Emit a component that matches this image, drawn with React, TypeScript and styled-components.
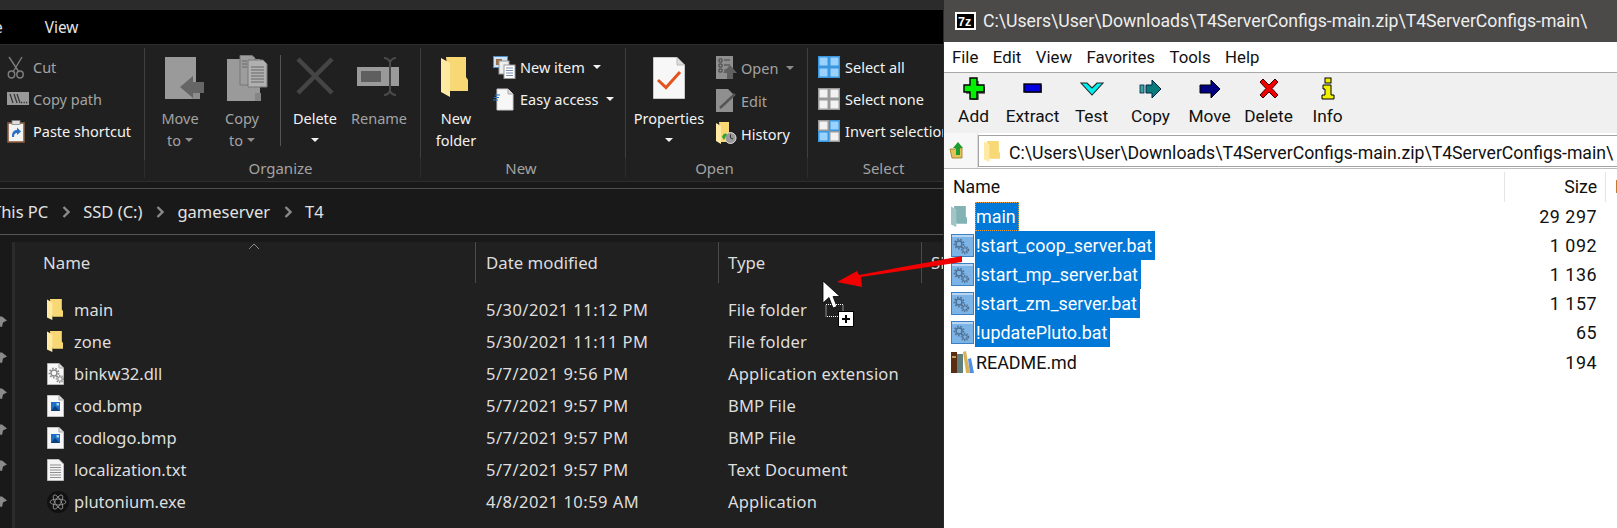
import React from 'react';
import styled, { createGlobalStyle } from 'styled-components';

const Global = createGlobalStyle`
  html, body { margin: 0; padding: 0; background: #191919; }
  * { box-sizing: border-box; }
`;

const Root = styled.div`
  position: relative; width: 1617px; height: 528px; display: flex; overflow: hidden;
  font-family: "Noto Sans", "Open Sans", sans-serif;
`;
const Explorer = styled.div`
  width: 944px; height: 528px; flex: none; display: flex; flex-direction: column; overflow: hidden;
  background: #191919; border-right: 1px solid #2a2a2a;
`;
const TopStrip = styled.div` height: 10px; background: #2b2b2b; flex: none; `;
const Tabs = styled.div`
  height: 34px; background: #000; flex: none; display: flex; align-items: center; color: #e6e6e6; font-size: 15.4px; padding-top: 1px;
`;
const Tab = styled.span<{ $clip?: boolean }>`
  margin-left: ${p => (p.$clip ? '-6px' : '0')};
  padding-right: ${p => (p.$clip ? '42px' : '0')};
`;
const Ribbon = styled.div`
  height: 138px; flex: none; display: flex; background: #202020; border-top: 1px solid #2d2d2d; border-bottom: 1px solid #2e2e2e;
`;
const Group = styled.div<{ $w: number }>`
  width: ${p => p.$w}px; flex: none; display: flex; flex-direction: column;
`;
const GroupBody = styled.div<{ $pad?: number }>`
  height: 112px; display: flex; padding-left: ${p => p.$pad ?? 0}px; border-right: 1px solid #3f3f3f; margin-top: 3px;
`;
const GroupLabel = styled.div`
  flex: 1; margin-bottom: 3px; display: flex; align-items: center; justify-content: center; color: #a3a3a3; font-size: 15px;
  border-right: 1px solid #2d2d2d; padding-right: 4px;
`;
const LargeButton = styled.div<{ $w: number; $off?: boolean }>`
  width: ${p => p.$w}px; flex: none; display: flex; flex-direction: column; align-items: center;
  color: ${p => (p.$off ? '#a3a3a3' : '#f2f2f2')}; font-size: 14.5px;
`;
const LargeIcon = styled.div<{ $dx?: number; $top?: number }>`
  height: 59px; width: 100%; display: flex; justify-content: center; align-items: flex-start;
  padding-top: ${p => p.$top ?? 9}px;
  padding-left: ${p => Math.max(0, (p.$dx ?? 0) * 2)}px;
  padding-right: ${p => Math.max(0, -(p.$dx ?? 0) * 2)}px;
`;
const LabelLine = styled.div`
  height: 22px; line-height: 22px; display: flex; align-items: center; gap: 4px; white-space: nowrap;
`;
const Caret = styled.span<{ $off?: boolean }>`
  display: inline-block; width: 0; height: 0; border-left: 4px solid transparent; border-right: 4px solid transparent;
  border-top: 4px solid ${p => (p.$off ? '#8c8c8c' : '#f2f2f2')};
`;
const VSep = styled.div`
  width: 1px; height: 91px; background: #555; margin: 7px 0 0 7px; flex: none;
`;
const SmallCol = styled.div<{ $pad: number; $top?: number }>`
  display: flex; flex-direction: column; padding-left: ${p => p.$pad}px; padding-top: ${p => p.$top ?? 3}px;
`;
const SmallRow = styled.div<{ $slot: number; $h?: number; $off?: boolean }>`
  display: grid; grid-template-columns: ${p => p.$slot}px auto auto; column-gap: 0; align-items: center;
  justify-content: start; height: ${p => p.$h ?? 32}px; white-space: nowrap; font-size: 14.5px;
  color: ${p => (p.$off ? '#a3a3a3' : '#f2f2f2')};
`;
const RowCaret = styled.span` margin-left: 8px; display: flex; align-items: center; `;
const BarGap = styled.div` height: 6px; flex: none; `;
const PathBar = styled.div`
  height: 47px; flex: none; display: flex; align-items: center; border-top: 1px solid #4d4d4d; border-bottom: 1px solid #565656;
  color: #e2e2e2; font-size: 16.5px;
`;
const Crumb = styled.span<{ $clip?: boolean }>` margin-left: ${p => (p.$clip ? '-8px' : '0')}; white-space: nowrap; `;
const Chevron = styled.span`
  width: 35px; flex: none; display: flex; justify-content: center;
`;
const Content = styled.div` flex: 1; display: flex; margin-top: 7px; min-height: 0; `;
const NavPane = styled.div`
  width: 15px; flex: none; display: flex; flex-direction: column; padding-top: 70px; border-right: 3px solid #2b2b2b; overflow: hidden;
`;
const Pin = styled.div` height: 36px; flex: none; `;
const List = styled.div` flex: 1; background: #202020; min-width: 0; `;
const Header = styled.div`
  position: relative; height: 41px; display: grid; grid-template-columns: 461px 243px 203px 1fr; color: #dcdcdc; font-size: 16.8px; margin-bottom: 11px;
`;
const HeadCell = styled.div<{ $pad: number; $end?: boolean }>`
  padding-left: ${p => p.$pad}px; display: flex; align-items: center; overflow: hidden; white-space: nowrap;
  border-right: ${p => (p.$end ? 'none' : '1px solid #4a4a4a')};
`;
const SortMark = styled.svg` position: absolute; left: 233px; top: 1px; `;
const FileRow = styled.div`
  height: 31.95px; display: grid; grid-template-columns: 461px 243px 203px 1fr; align-items: center; color: #dedede; font-size: 16.5px; white-space: nowrap;
`;
const NameCell = styled.div` display: grid; grid-template-columns: 27px auto; justify-content: start; align-items: center; padding-left: 32px; `;
const DateCell = styled.div` padding-left: 10px; letter-spacing: 0.47px; `;
const TypeCell = styled.div` padding-left: 9px; letter-spacing: 0.2px; `;

const Zip = styled.div`
  flex: 1; min-width: 0; display: flex; flex-direction: column; background: #fff; overflow: hidden;
  font-family: Roboto, "Noto Sans", sans-serif;
`;
const ZipTitle = styled.div`
  height: 42px; flex: none; background: #4b4a49; display: flex; align-items: center; padding-left: 11px; gap: 7px; color: #eee; font-size: 17.66px; white-space: nowrap;
`;
const ZipMenu = styled.div`
  height: 31px; flex: none; background: #fff; border-bottom: 1px solid #a8a8a8; display: flex; align-items: center; padding-left: 8px; gap: 14.5px; color: #111; font-size: 16.8px;
`;
const ZipToolbar = styled.div`
  height: 60px; flex: none; background: #f0f0f0; display: grid; grid-template-columns: repeat(7, 59px); align-content: start;
`;
const ToolButton = styled.div`
  display: flex; flex-direction: column; align-items: center; color: #111; font-size: 17.3px;
`;
const ToolIcon = styled.div` height: 33px; padding-top: 4px; display: flex; justify-content: center; `;
const ZipAddress = styled.div` height: 36px; flex: none; display: flex; background: #fff; border-bottom: 1px solid #bdbdbd; `;
const UpButton = styled.div`
  width: 34px; flex: none; background: #f7f7f7; border-right: 1px solid #ddd; display: flex; align-items: center; padding-left: 5px;
`;
const AddressBox = styled.div`
  flex: 1; min-width: 0; margin: 2px 0 1px 0; border: 1px solid #a3a3a3; border-right: none; display: flex; align-items: center; padding-left: 5px; gap: 9px; color: #111; font-size: 17.66px; white-space: nowrap; overflow: hidden;
`;
const AddressText = styled.span` padding-top: 3px; `;
const ZipHeader = styled.div`
  height: 33px; flex: none; display: grid; grid-template-columns: 561px 101px 1fr; color: #111; font-size: 17.66px; padding-top: 3px;
`;
const ZipHead = styled.div<{ $right?: boolean; $line?: boolean }>`
  display: flex; align-items: center; white-space: nowrap; overflow: hidden;
  justify-content: ${p => (p.$right ? 'flex-end' : 'flex-start')};
  padding: ${p => (p.$right ? '0 8px 0 0' : '0 0 0 9px')};
  border-right: ${p => (p.$line ? '1px solid #e5e5e5' : 'none')};
`;
const ZipRow = styled.div`
  height: 29.1px; display: grid; grid-template-columns: 561px 101px; align-items: center; color: #111; font-size: 17.9px;
`;
const ZipName = styled.div` display: flex; align-items: stretch; height: 100%; padding-left: 7px; `;
const ZipIcon = styled.div` width: 24px; flex: none; display: flex; align-items: center; `;
const ZipLabel = styled.span<{ $sel?: boolean; $focus?: boolean }>`
  display: flex; align-items: center; padding: 0 3px 0 1px; white-space: nowrap;
  background: ${p => (p.$sel ? '#0078d7' : 'transparent')};
  color: ${p => (p.$sel ? '#fff' : '#111')};
  outline: ${p => (p.$focus ? '1px dotted #f0a040' : 'none')};
  outline-offset: -1px;
`;
const ZipSize = styled.div` text-align: right; padding-right: 9px; letter-spacing: 0.5px; `;
const Overlay = styled.svg` position: absolute; left: 0; top: 0; pointer-events: none; `;

const Folder = ({ h = 40 }: { h?: number }) => (
  <svg width={h * 0.675} height={h} viewBox="0 0 27 40">
    <path d="M5 0H25V20L27 23V34H9Z" fill="#f8d775" />
    <path d="M0 1L9 6V40L0 35Z" fill="#ffe9a3" />
  </svg>
);
const SmallFolder = ({ tint }: { tint?: boolean }) => (
  <svg width="16" height="21" viewBox="0 0 27 40" preserveAspectRatio="none">
    <path d="M5 0H25V20L27 23V34H9Z" fill={tint ? '#83b2b4' : '#f8d775'} />
    <path d="M0 1L9 6V40L0 35Z" fill={tint ? '#9fc5c7' : '#ffe9a3'} />
  </svg>
);
const MoveTo = () => (
  <svg width="40" height="42" viewBox="0 0 40 42">
    <rect x="0" y="0" width="31" height="42" fill="#9a9a9a" />
    <rect x="27" y="36" width="8" height="6" fill="#8d8d8d" />
    <path d="M15 30L28 19V25H39V36H28V41Z" fill="#666" />
  </svg>
);
const CopyTo = () => (
  <svg width="41" height="46" viewBox="0 0 41 46">
    <rect x="0" y="4" width="33" height="42" fill="#9a9a9a" />
    <rect x="28" y="38" width="6" height="8" fill="#858585" />
    <path d="M13 0.5H25L28 3V30H13Z" fill="#9d9d9d" stroke="#777" />
    <path d="M21 5H36L40 9V32H21Z" fill="#b0b0b0" stroke="#777" />
    <path d="M24 12H37M24 15H37M24 18H37M24 21H37M24 24H37M24 27H37M15 6H20M15 9H20M15 12H20" stroke="#666" strokeWidth="1" />
  </svg>
);
const DeleteX = () => (
  <svg width="38" height="38" viewBox="0 0 38 38">
    <path d="M2 2L36 36M36 2L2 36" stroke="#454545" strokeWidth="4.5" />
  </svg>
);
const RenameIcon = () => (
  <svg width="44" height="40" viewBox="0 0 44 40">
    <rect x="0" y="10" width="42" height="19" fill="#9a9a9a" />
    <rect x="4" y="14" width="20" height="11" fill="#5f5f5f" />
    <path d="M27 1C31 1 32 3 33 5C34 3 35 1 39 1M33 5V34M27 38C31 38 32 36 33 34C34 36 35 38 39 38" fill="none" stroke="#4a4a4a" strokeWidth="2" />
  </svg>
);
const Scissors = () => (
  <svg width="18" height="23" viewBox="0 0 18 23">
    <path d="M2 1L12 16M15 1L6 16" stroke="#7d7d7d" strokeWidth="1.4" fill="none" />
    <ellipse cx="4.5" cy="18.5" rx="3.2" ry="3.4" fill="none" stroke="#7d7d7d" strokeWidth="1.5" />
    <ellipse cx="13" cy="18.5" rx="3.2" ry="3.4" fill="none" stroke="#7d7d7d" strokeWidth="1.5" />
  </svg>
);
const CopyPath = () => (
  <svg width="22" height="14" viewBox="0 0 22 14">
    <rect width="22" height="13" fill="#999" />
    <path d="M3 2L6 11M7 2L10 11M10 2L13 11" stroke="#333" strokeWidth="1.2" />
    <path d="M14 10.5H15.2M16.6 10.5H17.8M19 10.5H20.2" stroke="#333" strokeWidth="1.3" />
  </svg>
);
const PasteShortcut = () => (
  <svg width="18" height="23" viewBox="0 0 18 23">
    <rect x="1" y="3" width="16" height="19" fill="#f3f3f3" stroke="#8a5b3d" strokeWidth="1.6" />
    <rect x="5" y="0.5" width="8" height="4" fill="#ddd" stroke="#777" strokeWidth=".7" />
    <path d="M5 16C5 11 8 10 10 10V7.5L14 11.5L10 15V13C8 13 7 14 7 17H5Z" fill="#2d6fc4" />
  </svg>
);
const NewItem = () => (
  <svg width="23" height="23" viewBox="0 0 23 23">
    <rect x="0.5" y="0.5" width="14" height="11" fill="#cfe3f5" stroke="#4b8ec9" />
    <rect x="3" y="3" width="6" height="6" fill="#9a6e4d" />
    <rect x="6" y="5" width="10" height="13" fill="#eee" stroke="#999" />
    <rect x="11" y="9" width="11" height="13.5" fill="#fff" stroke="#999" />
    <path d="M13 12H20M13 14.5H20M13 17H20M13 19.5H20" stroke="#7b8fb0" />
  </svg>
);
const EasyAccess = () => (
  <svg width="21" height="23" viewBox="0 0 21 23">
    <path d="M4 1H15L20 6V22H4Z" fill="#f7f7f7" stroke="#ccc" />
    <path d="M15 1V6H20" fill="#ddd" stroke="#aaa" />
    <path d="M2 7H7M1 9.5H6M0 12H5" stroke="#1f77d0" strokeWidth="1.2" />
  </svg>
);
const Properties = () => (
  <svg width="32" height="42" viewBox="0 0 32 42">
    <path d="M0.5 0.5H24L31.5 8V41.5H0.5Z" fill="#f7f7f7" stroke="#c8c8c8" />
    <path d="M24 0.5V8H31.5" fill="#dcdcdc" stroke="#bbb" />
    <path d="M5 23L13 30.5L27 15" fill="none" stroke="#e2531d" strokeWidth="3" />
  </svg>
);
const OpenIcon = () => (
  <svg width="21" height="23" viewBox="0 0 21 23">
    <rect width="17" height="23" fill="#8f8f8f" />
    <path d="M3 3H6V6H3ZM3 8H6V11H3ZM3 13H6V16H3ZM8 4H14M8 9H14M8 14H10" stroke="#444" fill="none" />
    <path d="M7 17L14 9L21 17H17V23H11V17Z" fill="#606060" />
  </svg>
);
const EditIcon = () => (
  <svg width="21" height="23" viewBox="0 0 21 23">
    <path d="M0 0H12L17 5V23H0Z" fill="#8f8f8f" />
    <path d="M4 19L19 5" stroke="#555" strokeWidth="2.4" />
  </svg>
);
const HistoryIcon = () => (
  <svg width="21" height="23" viewBox="0 0 21 23">
    <path d="M3 0H13V20H5Z" fill="#f8d775" />
    <path d="M0 1L5 4V22L0 19Z" fill="#ffe9a3" />
    <circle cx="14.5" cy="16" r="5.5" fill="#999" stroke="#ddd" />
    <path d="M14.5 12.5V16L17 17" stroke="#333" fill="none" />
    <path d="M6 15C7 11 10 11 11 12L8 18Z" fill="#2ea32e" />
  </svg>
);
const SelectIcon = ({ v }: { v: 'all' | 'none' | 'inv' }) => {
  const blue = { fill: '#99d1ff', stroke: '#3a96dd' };
  const white = { fill: '#f2f2f2', stroke: '#9a9a9a' };
  const map = { all: [blue, blue, blue, blue], none: [white, white, white, white], inv: [white, blue, blue, white] }[v];
  return (
    <svg width="22" height="22" viewBox="0 0 22 22">
      {[[0, 0], [11, 0], [0, 11], [11, 11]].map(([x, y], i) => (
        <rect key={i} x={x + 0.75} y={y + 0.75} width="9.5" height="9.5" fill={map[i].fill} stroke={map[i].stroke} strokeWidth="1.5" />
      ))}
    </svg>
  );
};
const PinIcon = () => (
  <svg width="7" height="13" viewBox="0 0 7 13">
    <path d="M0 0.5L2 0.5L7 4.5L3 6.5L2 11L0 10.5Z" fill="#8a8a8a" />
  </svg>
);
const ChevronIcon = () => (
  <svg width="8" height="12" viewBox="0 0 8 12"><path d="M1.5 1L6.5 6L1.5 11" fill="none" stroke="#8a8a8a" strokeWidth="2.4" /></svg>
);
const Gears = ({ x = 0, y = 0, c = '#8a8a8a' }: { x?: number; y?: number; c?: string }) => (
  <g transform={`translate(${x},${y})`} fill="none" stroke={c}>
    <circle cx="5" cy="5" r="3" strokeWidth="1.4" />
    <circle cx="5" cy="5" r="4.6" strokeWidth="1.6" strokeDasharray="1.6 1.6" />
    <circle cx="11" cy="11" r="2.2" strokeWidth="1.1" />
    <circle cx="11" cy="11" r="3.6" strokeWidth="1.3" strokeDasharray="1.3 1.3" />
  </g>
);
const DllIcon = () => (
  <svg width="17" height="22" viewBox="0 0 17 22">
    <path d="M0.5 0.5H12L16.5 5V21.5H0.5Z" fill="#f7f7f7" stroke="#b5b5b5" />
    <path d="M12 0.5V5H16.5" fill="#ddd" stroke="#aaa" />
    <Gears x={2} y={5} />
  </svg>
);
const BmpIcon = () => (
  <svg width="17" height="22" viewBox="0 0 17 22">
    <path d="M0.5 0.5H12L16.5 5V21.5H0.5Z" fill="#f7f7f7" stroke="#c0c0c0" />
    <path d="M12 0.5V5H16.5" fill="#ddd" stroke="#aaa" />
    <rect x="4" y="7" width="9" height="9" fill="#1b6fc4" />
    <path d="M4 16L8 11L13 16Z" fill="#0d3d7a" />
    <rect x="9.5" y="8" width="2.5" height="2.5" fill="#9fd2f7" />
  </svg>
);
const TxtIcon = () => (
  <svg width="17" height="22" viewBox="0 0 17 22">
    <path d="M0.5 0.5H12L16.5 5V21.5H0.5Z" fill="#f4f4f4" stroke="#bbb" />
    <path d="M3 6H14M3 8.5H14M3 11H14M3 13.5H14M3 16H14M3 18.5H14" stroke="#8f8f8f" />
  </svg>
);
const PlutoIcon = () => (
  <svg width="22" height="22" viewBox="2 0 22 22">
    <circle cx="13" cy="11" r="11" fill="#111" />
    <g fill="none" stroke="#9a9a9a" strokeWidth=".8">
      <ellipse cx="13" cy="11" rx="8" ry="3" />
      <ellipse cx="13" cy="11" rx="8" ry="3" transform="rotate(60 13 11)" />
      <ellipse cx="13" cy="11" rx="8" ry="3" transform="rotate(120 13 11)" />
    </g>
  </svg>
);
const BatIcon = () => (
  <svg width="23" height="23" viewBox="0 0 23 23">
    <rect x="0.5" y="0.5" width="22" height="22" fill="#7db4e8" stroke="#3b7fc4" />
    <rect x="1" y="1" width="21" height="2" fill="#b9d6f2" />
    <Gears x={3} y={5} c="#4f6f8f" />
  </svg>
);
const BooksIcon = () => (
  <svg width="23" height="23" viewBox="0 0 23 23">
    <rect x="0" y="1" width="6" height="21" fill="#5a2d12" />
    <rect x="1" y="5" width="4" height="2" fill="#c39a5a" />
    <rect x="6" y="3" width="6" height="19" fill="#5f7f7f" />
    <path d="M12 1L15 0L19 22H15Z" fill="#d8b25a" />
    <path d="M17 8L20 7L23 22H19Z" fill="#4f8fe8" />
  </svg>
);
const SevenZ = () => (
  <svg width="21" height="18" viewBox="0 0 21 18">
    <rect x="0" y="0" width="21" height="18" fill="#fff" />
    <rect x="2" y="2" width="17" height="14" fill="#000" />
    <text x="3" y="14" fontSize="12.5" fontWeight="700" fontFamily="Liberation Sans" fill="#fff">7z</text>
  </svg>
);
const AddIcon = () => (
  <svg width="22" height="25" viewBox="0 0 22 25">
    <path d="M8 3H15V9H21V16H15V22H8V16H2V9H8Z" fill="#777" transform="translate(1,1)" />
    <path d="M7 1H14V8H21V15H14V22H7V15H1V8H7Z" fill="#00f000" stroke="#000" strokeWidth="1.4" />
  </svg>
);
const ExtractIcon = () => (
  <svg width="20" height="25" viewBox="0 0 20 25">
    <rect x="2" y="8" width="17" height="8" fill="#777" />
    <rect x="1" y="7" width="17" height="8" fill="#0000e0" stroke="#000" strokeWidth="1.4" />
  </svg>
);
const TestIcon = () => (
  <svg width="24" height="25" viewBox="0 0 24 25">
    <path d="M1 6H7L12 11L17 6H23L12 18Z" fill="#00f0f0" stroke="#222" strokeWidth="1.1" />
  </svg>
);
const CopyArrow = () => (
  <svg width="24" height="25" viewBox="0 0 24 25">
    <rect x="1" y="8" width="4" height="8" fill="#3aa3a3" stroke="#024" strokeWidth=".8" />
    <path d="M7 8H13V3L22 12L13 21V16H7Z" fill="#0a7a7a" stroke="#024" strokeWidth="1" />
  </svg>
);
const MoveArrow = () => (
  <svg width="24" height="25" viewBox="0 0 24 25">
    <path d="M2 8H13V3L22 12L13 21V16H2Z" fill="#000080" stroke="#000" strokeWidth="1" />
  </svg>
);
const RedX = () => (
  <svg width="20" height="25" viewBox="0 0 20 25">
    <path d="M4 2L10 8L16 2L19 5L13 11.5L19 18L16 21L10 15L4 21L1 18L7 11.5L1 5Z" fill="#f00000" stroke="#300" strokeWidth="1" />
  </svg>
);
const InfoIcon = () => (
  <svg width="14" height="25" viewBox="0 0 14 25">
    <rect x="4" y="1" width="6" height="5" fill="#f0f000" stroke="#000" />
    <path d="M2 8H10V18H13V22H1V18H4V12H2Z" fill="#f0f000" stroke="#000" />
  </svg>
);
const UpIcon = () => (
  <svg width="18" height="20" viewBox="0 0 18 20">
    <path d="M1 8H6L7 7H13V17H3Z" fill="#e4c25a" stroke="#9a7a20" strokeWidth=".8" />
    <path d="M9 1L14 7H11V14H7V7H4Z" fill="#1f9a2f" />
  </svg>
);

const files = [
  ['main', '5/30/2021 11:12 PM', 'File folder', 'f'],
  ['zone', '5/30/2021 11:11 PM', 'File folder', 'f'],
  ['binkw32.dll', '5/7/2021 9:56 PM', 'Application extension', 'd'],
  ['cod.bmp', '5/7/2021 9:57 PM', 'BMP File', 'b'],
  ['codlogo.bmp', '5/7/2021 9:57 PM', 'BMP File', 'b'],
  ['localization.txt', '5/7/2021 9:57 PM', 'Text Document', 't'],
  ['plutonium.exe', '4/8/2021 10:59 AM', 'Application', 'p'],
];
const fileIcon = (k: string) =>
  k === 'f' ? <SmallFolder /> : k === 'd' ? <DllIcon /> : k === 'b' ? <BmpIcon /> : k === 't' ? <TxtIcon /> : <PlutoIcon />;

const zipRows = [
  ['main', '29 297', 'f'],
  ['!start_coop_server.bat', '1 092', 'b'],
  ['!start_mp_server.bat', '1 136', 'b'],
  ['!start_zm_server.bat', '1 157', 'b'],
  ['!updatePluto.bat', '65', 'b'],
  ['README.md', '194', 'r'],
];
const tools: [string, React.ReactNode][] = [
  ['Add', <AddIcon />], ['Extract', <ExtractIcon />], ['Test', <TestIcon />], ['Copy', <CopyArrow />],
  ['Move', <MoveArrow />], ['Delete', <RedX />], ['Info', <InfoIcon />],
];
const PATH = 'C:\\Users\\User\\Downloads\\T4ServerConfigs-main.zip\\T4ServerConfigs-main\\';

export default function App() {
  return (
    <Root>
      <Global />
      <Explorer>
        <TopStrip />
        <Tabs><Tab $clip>e</Tab><Tab>View</Tab></Tabs>
        <Ribbon>
          <Group $w={145}>
            <GroupBody>
              <SmallCol $pad={7}>
                <SmallRow $slot={26} $off><Scissors /><span>Cut</span></SmallRow>
                <SmallRow $slot={26} $off><CopyPath /><span>Copy path</span></SmallRow>
                <SmallRow $slot={26}><PasteShortcut /><span>Paste shortcut</span></SmallRow>
              </SmallCol>
            </GroupBody>
            <GroupLabel />
          </Group>
          <Group $w={276}>
            <GroupBody $pad={4}>
              <LargeButton $w={62} $off><LargeIcon $dx={5}><MoveTo /></LargeIcon><LabelLine>Move</LabelLine><LabelLine>to <Caret $off /></LabelLine></LargeButton>
              <LargeButton $w={62} $off><LargeIcon $dx={5} $top={7}><CopyTo /></LargeIcon><LabelLine>Copy</LabelLine><LabelLine>to <Caret $off /></LabelLine></LargeButton>
              <VSep />
              <LargeButton $w={68}><LargeIcon><DeleteX /></LargeIcon><LabelLine>Delete</LabelLine><LabelLine><Caret /></LabelLine></LargeButton>
              <LargeButton $w={60} $off><LargeIcon><RenameIcon /></LargeIcon><LabelLine>Rename</LabelLine></LargeButton>
            </GroupBody>
            <GroupLabel>Organize</GroupLabel>
          </Group>
          <Group $w={205}>
            <GroupBody $pad={4}>
              <LargeButton $w={62}><LargeIcon $dx={-2}><Folder /></LargeIcon><LabelLine>New</LabelLine><LabelLine>folder</LabelLine></LargeButton>
              <SmallCol $pad={6}>
                <SmallRow $slot={27}><NewItem /><span>New item</span><RowCaret><Caret /></RowCaret></SmallRow>
                <SmallRow $slot={27}><EasyAccess /><span>Easy access</span><RowCaret><Caret /></RowCaret></SmallRow>
              </SmallCol>
            </GroupBody>
            <GroupLabel>New</GroupLabel>
          </Group>
          <Group $w={182}>
            <GroupBody $pad={4}>
              <LargeButton $w={78}><LargeIcon><Properties /></LargeIcon><LabelLine>Properties</LabelLine><LabelLine><Caret /></LabelLine></LargeButton>
              <SmallCol $pad={8}>
                <SmallRow $slot={25} $h={33} $off><OpenIcon /><span>Open</span><RowCaret><Caret $off /></RowCaret></SmallRow>
                <SmallRow $slot={25} $h={33} $off><EditIcon /><span>Edit</span></SmallRow>
                <SmallRow $slot={25} $h={33}><HistoryIcon /><span>History</span></SmallRow>
              </SmallCol>
            </GroupBody>
            <GroupLabel>Open</GroupLabel>
          </Group>
          <Group $w={156}>
            <GroupBody $pad={10}>
              <SmallCol $pad={0}>
                <SmallRow $slot={27}><SelectIcon v="all" /><span>Select all</span></SmallRow>
                <SmallRow $slot={27}><SelectIcon v="none" /><span>Select none</span></SmallRow>
                <SmallRow $slot={27}><SelectIcon v="inv" /><span>Invert selection</span></SmallRow>
              </SmallCol>
            </GroupBody>
            <GroupLabel>Select</GroupLabel>
          </Group>
        </Ribbon>
        <BarGap />
        <PathBar>
          <Crumb $clip>This PC</Crumb><Chevron><ChevronIcon /></Chevron>
          <Crumb>SSD (C:)</Crumb><Chevron><ChevronIcon /></Chevron>
          <Crumb>gameserver</Crumb><Chevron><ChevronIcon /></Chevron>
          <Crumb>T4</Crumb>
        </PathBar>
        <Content>
          <NavPane>{[0, 1, 2, 3, 4, 5].map(i => <Pin key={i}><PinIcon /></Pin>)}</NavPane>
          <List>
            <Header>
              <HeadCell $pad={28}>Name</HeadCell>
              <HeadCell $pad={10}>Date modified</HeadCell>
              <HeadCell $pad={9}>Type</HeadCell>
              <HeadCell $pad={9} $end>Size</HeadCell>
              <SortMark width="12" height="7" viewBox="0 0 12 7"><path d="M1 6L6 1L11 6" fill="none" stroke="#8a8a8a" /></SortMark>
            </Header>
            {files.map(f => (
              <FileRow key={f[0]}>
                <NameCell>{fileIcon(f[3])}<span>{f[0]}</span></NameCell>
                <DateCell>{f[1]}</DateCell>
                <TypeCell>{f[2]}</TypeCell>
              </FileRow>
            ))}
          </List>
        </Content>
      </Explorer>
      <Zip>
        <ZipTitle><SevenZ /><span>{PATH}</span></ZipTitle>
        <ZipMenu>{['File', 'Edit', 'View', 'Favorites', 'Tools', 'Help'].map(m => <span key={m}>{m}</span>)}</ZipMenu>
        <ZipToolbar>
          {tools.map(([l, i]) => <ToolButton key={l}><ToolIcon>{i}</ToolIcon><span>{l}</span></ToolButton>)}
        </ZipToolbar>
        <ZipAddress>
          <UpButton><UpIcon /></UpButton>
          <AddressBox><SmallFolder /><AddressText>{PATH}</AddressText></AddressBox>
        </ZipAddress>
        <ZipHeader>
          <ZipHead $line>Name</ZipHead>
          <ZipHead $right $line>Size</ZipHead>
          <ZipHead>P</ZipHead>
        </ZipHeader>
        {zipRows.map((r, i) => (
          <ZipRow key={r[0]}>
            <ZipName>
              <ZipIcon>{r[2] === 'f' ? <SmallFolder tint /> : r[2] === 'b' ? <BatIcon /> : <BooksIcon />}</ZipIcon>
              <ZipLabel $sel={r[2] !== 'r'} $focus={i === 0}>{r[0]}</ZipLabel>
            </ZipName>
            <ZipSize>{r[1]}</ZipSize>
          </ZipRow>
        ))}
      </Zip>
      <Overlay width="1617" height="528" viewBox="0 0 1617 528">
        <path d="M962 256L962 262L861 277L862 287L837 282L857 271L859 275Z" fill="#f00000" />
        <path d="M823 281V303L829 297.5L833 308L837 306.5L833 296.5L840 296.5Z" fill="#fff" stroke="#000" strokeWidth=".8" />
        <rect x="826" y="304.5" width="17" height="12" fill="none" stroke="#fff" strokeDasharray="1 1" />
        <rect x="838.5" y="311.5" width="15" height="15" fill="#fff" stroke="#000" />
        <path d="M846 315V323M842 319H850" stroke="#000" strokeWidth="2" />
      </Overlay>
    </Root>
  );
}
